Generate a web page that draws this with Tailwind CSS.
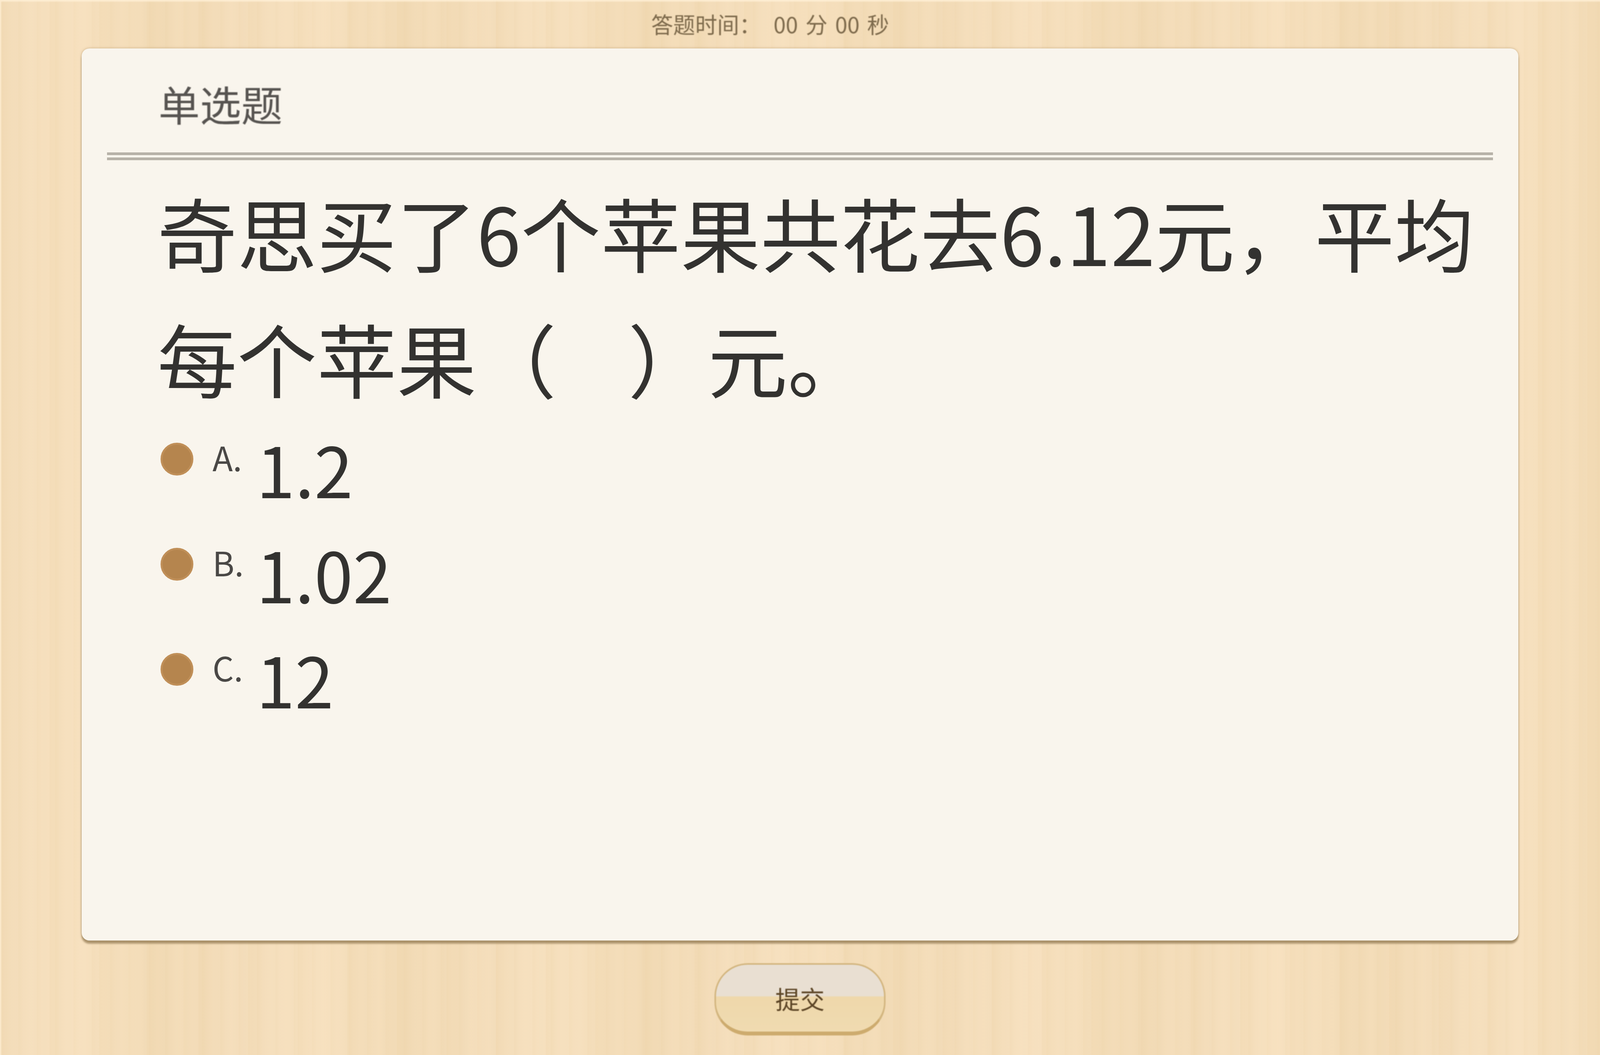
<!DOCTYPE html>
<html lang="zh-CN">

<head>
  <meta charset="UTF-8" />
  <title>答题</title>
  <script src="https://cdn.jsdelivr.net/npm/@tailwindcss/browser@4"></script>
</head>

<body class="m-0">
  <!-- page with wood background -->
  <div class="flex flex-col items-center w-full h-[2700px] overflow-hidden bg-[#f3dcb9] shadow-[inset_3px_4px_3px_rgba(255,240,215,0.8)] bg-[repeating-linear-gradient(90deg,rgba(236,208,160,0.18)_0px,rgba(236,208,160,0)_41px,rgba(255,232,200,0.15)_83px,rgba(255,232,200,0)_127px),repeating-linear-gradient(90deg,rgba(232,205,155,0.12)_0px,rgba(232,205,155,0)_13px,rgba(250,228,195,0.14)_29px,rgba(232,205,155,0)_47px),repeating-linear-gradient(90deg,rgba(255,235,205,0)_0px,rgba(255,235,205,0.25)_190px,rgba(235,210,165,0.25)_410px,rgba(255,235,205,0)_617px)] font-['Noto_Sans_CJK_SC','Liberation_Sans',sans-serif]">

    <!-- timer -->
    <div class="flex items-center justify-center h-[124px] w-full pr-[3.73vw] pb-[2px] text-[1.375vw] leading-none text-[#7d6a4c] blur-[1px]">
      <span>答题时间：</span>
      <span class="ml-[0.77vw] [word-spacing:0.167vw]">00 分 00 秒</span>
    </div>

    <!-- question card -->
    <div class="flex flex-col w-[89.81vw] h-[2283px] px-[1.584vw] bg-[#f9f5ed] rounded-[20px] shadow-[0_8px_4px_rgba(150,125,85,0.75),0_0_6px_rgba(170,140,95,0.6)]">
      <div class="flex items-center h-[266px] pl-[3.23vw] pt-[14px] text-[2.584vw] leading-none text-[#575451] blur-[1px]">单选题</div>
      <div class="h-[20px] border-b-[20px] border-double border-[#b7b2a8]"></div>

      <div class="flex flex-col pl-[3.15vw] pt-[21px] text-[#333230]">
        <p class="text-[4.99vw] leading-[322px]">奇思买了6个苹果共花去6.12元，平均每个苹果（&nbsp;&nbsp;&nbsp;&nbsp;）元。</p>

        <div class="flex flex-col mt-[11px] pl-[0.205vw]">
          <div class="flex items-start h-[269px]">
            <span class="flex items-center h-[178px]"><span class="w-[2.042vw] aspect-square rounded-full bg-[#b5854e] border-[5px] border-[#c08f58]"></span></span>
            <span class="w-[3.938vw] pl-[1.209vw] text-[2.084vw] leading-[166px] text-[#4a4846]">A.</span>
            <span class="text-[4.355vw] leading-[222px]">1.2</span>
          </div>
          <div class="flex items-start h-[269px]">
            <span class="flex items-center h-[178px]"><span class="w-[2.042vw] aspect-square rounded-full bg-[#b5854e] border-[5px] border-[#c08f58]"></span></span>
            <span class="w-[3.938vw] pl-[1.209vw] text-[2.084vw] leading-[166px] text-[#4a4846]">B.</span>
            <span class="text-[4.355vw] leading-[222px]">1.02</span>
          </div>
          <div class="flex items-start h-[269px]">
            <span class="flex items-center h-[178px]"><span class="w-[2.042vw] aspect-square rounded-full bg-[#b5854e] border-[5px] border-[#c08f58]"></span></span>
            <span class="w-[3.938vw] pl-[1.209vw] text-[2.084vw] leading-[166px] text-[#4a4846]">C.</span>
            <span class="text-[4.355vw] leading-[222px]">12</span>
          </div>
        </div>
      </div>
    </div>

    <!-- submit -->
    <button class="flex items-center justify-center w-[10.67vw] h-[185px] mt-[58px] rounded-[85px] border-[4px] border-[#d3b680] border-b-[10px] border-b-[#cdab6e] bg-[linear-gradient(180deg,#e9dfd2_0px,#e9dfd2_80px,#efd8ab_82px,#f0dbb1_100%)] text-[1.542vw] leading-none text-[#5c4526] blur-[1px]">提交</button>
  </div>
</body>

</html>
